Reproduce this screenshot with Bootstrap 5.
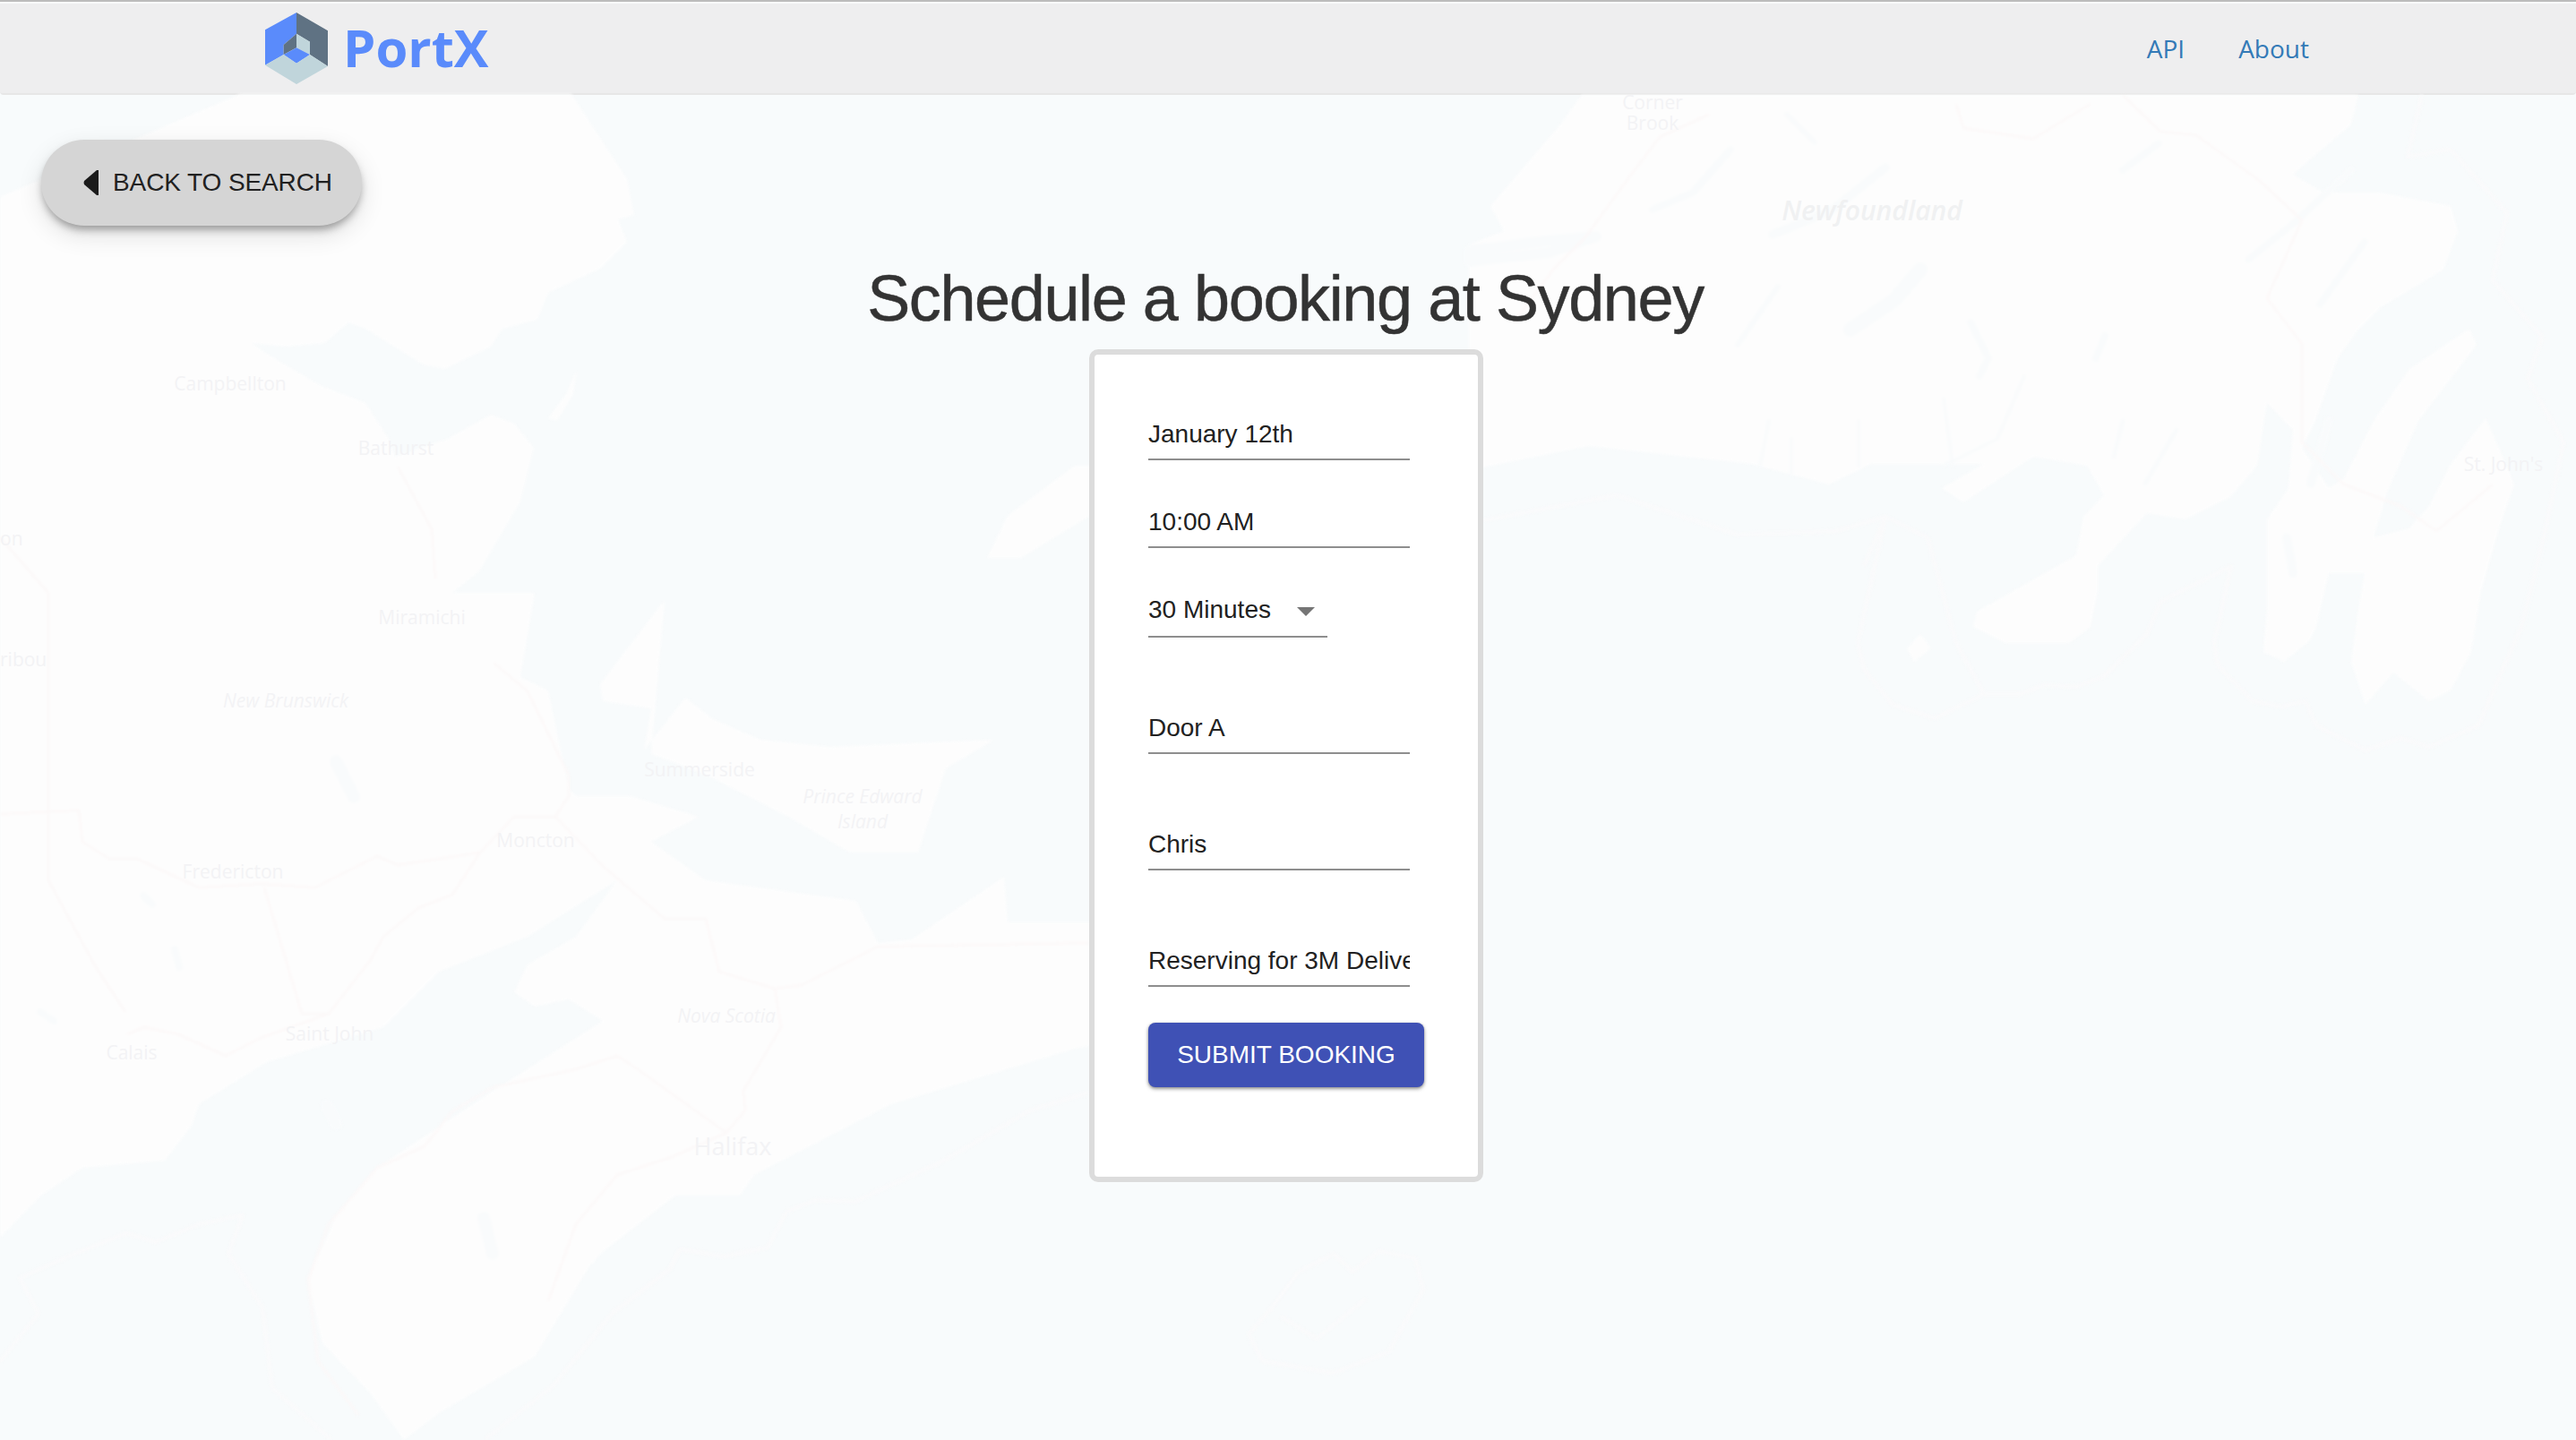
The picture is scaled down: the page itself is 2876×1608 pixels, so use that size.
<!doctype html>
<html lang="en">
<head>
<meta charset="utf-8">
<title>PortX</title>
<link href="https://cdn.jsdelivr.net/npm/bootstrap@5.3.0/dist/css/bootstrap.min.css" rel="stylesheet">
<style>
html,body{height:100%}
body{font-family:"Liberation Sans",Arial,sans-serif;background:#f8fbfc;color:#212121;min-height:1608px;display:flex;flex-direction:column;border-top:2px solid #bcbcbc;overflow:hidden}
.topbar{background:#eeeeef;height:102px;margin-top:2px;padding:0;border-bottom:2px solid #e7e7e7;flex:none;border-radius:0 0 4px 4px}
.topbar-in{padding:0 298px 0 296px}
.brand-mark{width:70px;height:80px;display:block}
.brand-name{font-family:"Open Sans",sans-serif;font-weight:700;font-size:58px;line-height:1;color:#5a8bfb;margin-left:17px;margin-top:-2px;filter:blur(.4px)}
.top-link{font-family:"Open Sans",sans-serif;font-size:28px;color:#337ab7;text-decoration:none;line-height:1}
.links-gap{gap:60px}
.stage{position:relative;flex:1 1 auto;min-height:0}
.map-art{position:absolute;left:0;top:-104px;width:2876px;height:1608px}
.map-shapes{filter:blur(1.5px);transform:translateY(-2px)}
.map-art text{font-family:"Open Sans",sans-serif;font-size:21px;fill:#f3f3f5;text-anchor:middle}
.map-art .it{font-style:italic}
.map-art .edge{text-anchor:start}
.land{fill:#fdfdfd}
.lake{fill:none;stroke:#f9fbfc;stroke-linecap:round;stroke-linejoin:round}
.road{fill:none;stroke:#fcf8f8;stroke-width:2.5;stroke-linejoin:round}
.eez{fill:none;stroke:#fafafb;stroke-width:4;stroke-linejoin:round}
.front{position:relative}
.back-pill{display:inline-flex;align-items:center;height:96px;margin:50px 0 0 46px;padding:0 0 0 47px;width:358px;border:0;border-radius:48px;background:#d5d5d5;color:#212121;font-size:28px;letter-spacing:-.1px;box-shadow:0 6px 10px -2px rgba(0,0,0,.35),0 10px 28px rgba(0,0,0,.12)}
.back-tri{width:17px;height:28px;margin-right:16px;flex:none}
.page-title{font-family:"Liberation Sans",Arial,sans-serif;font-size:72px;font-weight:400;letter-spacing:-1.4px;-webkit-text-stroke:.5px #333;line-height:84px;color:#333;text-align:center;margin:39px 0 15px;padding-right:6px}
.form-wrap{padding-right:4px}
.form-box{width:440px;height:930px;background:#fff;border:6px solid #dcdcdc;border-radius:10px;padding:74px 0 0 60px}
.fld{display:block;width:292px;height:44px;padding:0 0 12px;border:0;border-bottom:2px solid #8e8e8e;border-radius:0;background:transparent;color:#212121;font-family:"Liberation Sans",Arial,sans-serif;font-size:28px;line-height:30px;outline:0}
.fld-time{margin-top:54px}
.fld-pick{width:200px;margin-top:54px;height:46px;padding:0;display:flex;align-items:flex-start;justify-content:space-between}
.pick-caret{width:20px;height:10px;margin:12px 14px 0 0}
.fld-door,.fld-lower{margin-top:86px}
.submit-btn{display:block;width:308px;height:72px;margin-top:40px;padding:0;border:0;border-radius:8px;background:#3f51b5;color:#fff;font-size:28px;box-shadow:0 2px 4px rgba(0,0,0,.35),0 1px 3px rgba(0,0,0,.2)}
</style>
</head>
<body>
<nav class="navbar topbar">
  <div class="container-fluid topbar-in d-flex justify-content-between align-items-center">
    <a class="d-flex align-items-center text-decoration-none" href="#">
      <svg class="brand-mark" viewBox="108 42 210 240" aria-hidden="true">
        <polygon fill="#5a8bfb" points="213,42 108,100 108,218 170,183 170,150 213,113"/>
        <polygon fill="#5f7283" points="213,42 318,103 318,222 258,183 258,140 213,113"/>
        <polygon fill="#5f7283" points="213,113 170,150 170,183 213,160"/>
        <polygon fill="#c0d5db" points="213,113 258,140 258,183 213,160"/>
        <polygon fill="#5a8bfb" points="213,160 258,183 213,212 170,183"/>
        <polygon fill="#c0d5db" points="108,218 170,183 213,212 258,183 318,222 213,282"/>
      </svg>
      <span class="brand-name">PortX</span>
    </a>
    <div class="d-flex links-gap">
      <a class="top-link" href="#">API</a>
      <a class="top-link" href="#">About</a>
    </div>
  </div>
</nav>
<main class="stage">
  <svg class="map-art" viewBox="0 0 2876 1608" aria-hidden="true">
    <g class="map-shapes">
    <polygon class="land" points="0,220 268,105 638,105 700,200 708,240 690,245 700,270 670,300 612,327 600,357 561,367 548,387 497,412 472,407 408,367 389,360 363,383 319,387 280,383 306,400 357,430 408,450 434,490 441,510 500,490 548,463 574,473 596,500 581,560 535,638 505,662 597,662 589,709 581,756 612,771 635,881 643,889 704,889 780,912 727,940 788,983 956,1006 980,1053 1018,1049 1121,979 1125,1030 1230,1030 1230,1165 1200,1171 995,1233 842,1312 826,1335 754,1335 673,1398 658,1414 597,1515 490,1578 451,1608 413,1555 360,1500 344,1429 375,1359 421,1304 551,1218 673,1140 635,1116 597,1124 574,1108 589,1077 643,1046 689,983 589,1046 490,1085 428,1147 298,1186 222,1233 214,1257 184,1296 92,1304 46,1335 0,1382"/>
    <polygon class="land" points="742,670 670,764 673,783 727,791 719,838 765,779 796,803 849,826 926,834 1110,826 1056,858 1025,952 949,952 880,912 788,865 727,842"/>
    <polygon class="land" points="1200,520 1125,576 1102,623 1140,623 1230,568 1230,520"/>
    <polygon class="land" points="644,413 632,440 612,467 622,470 640,440"/>
    <polygon class="land" points="1766,106 2633,106 2625,139 2578,179 2560,195 2594,215 2657,215 2736,230 2744,258 2728,301 2657,344 2633,368 2610,400 2585,470 2570,500 2600,545 2617,534 2650,470 2690,412 2757,367 2765,385 2700,470 2665,550 2650,600 2690,590 2712,565 2735,520 2775,467 2790,500 2807,541 2790,590 2770,660 2759,728 2736,771 2712,783 2672,751 2641,787 2625,739 2633,680 2640,640 2600,640 2586,700 2578,716 2550,739 2527,728 2531,680 2531,580 2555,545 2560,480 2531,450 2520,520 2490,555 2440,580 2397,573 2342,632 2342,660 2334,700 2310,718 2239,718 2203,700 2207,683 2318,620 2326,577 2349,553 2330,520 2270,510 2192,561 2168,545 2215,518 2089,518 2042,541 1955,518 1774,498 1640,525 1640,273 1679,258 1664,230 1742,139"/>
    <polygon class="land" points="2129,724 2144,708 2156,724 2137,739"/>
    <g class="lake">
      <path stroke-width="12" d="M1640 280 1735 268 1782 264 1730 282 1640 292Z"/>
      <path stroke-width="8" d="M1932 167 1890 215 1845 234"/>
      <path stroke-width="6" d="M1995 128 2026 159"/>
      <path stroke-width="10" d="M2105 187 2045 235 1979 262"/>
      <path stroke-width="6" d="M1940 385 1985 320"/>
      <path stroke-width="16" d="M2144 301 2115 335 2066 368"/>
      <path stroke-width="8" d="M2200 360 2220 400 2210 420"/>
      <path stroke-width="8" d="M2350 375 2340 400"/>
      <path stroke-width="4" d="M2260 420 2230 490 2170 520"/>
      <path stroke-width="4" d="M1975 470 1965 520M2000 490 2000 530M2075 470 2075 520M2170 445 2180 520"/>
      <path stroke-width="5" d="M2430 480 2395 540M2370 470 2360 510"/>
      <path stroke-width="8" d="M2410 160 2370 190M2625 190 2560 250 2510 290M2640 270 2590 340"/>
      <path stroke-width="10" d="M2553 600 2560 640M2600 470 2580 540"/>
      <path stroke-width="8" d="M160 1000 170 1010M195 1060 200 1080M45 1130 60 1140"/>
      <path stroke-width="14" d="M540 1360 550 1400M365 1235 375 1255M375 850 395 890"/>
    </g>
    <g class="eez">
      <path d="M2074 718 2081 747 2113 787 2160 802 2195 785 2215 775 2255 775 2282 765 2318 767 2349 755 2397 708 2412 672 2491 632 2472 718 2476 743 2515 783 2547 789 2574 783 2586 810 2641 838 2680 824 2712 834 2767 810 2815 700 2840 600 2862 494 2822 423 2838 376 2783 313 2799 238 2736 167 2688 175 2704 106"/>
      <path d="M2215 775 2184 718 2152 600 2105 577 2074 718M2105 577 2081 632M2105 577 2050 593 1940 597 1805 553 1656 581"/>
      <path d="M0 1520 43 1467 22 1427 76 1403 141 1377 174 1387 222 1367 271 1357 255 1400 293 1460 304 1550 369 1607"/>
      <path d="M542 1607 618 1547 683 1467 748 1417 759 1395 808 1403 857 1393 878 1353 911 1340 954 1342 1052 1297 1150 1240 1215 1220"/>
      <path d="M1489 1400 1450 1420 1420 1460 1394 1490 1410 1520 1489 1533 1550 1510 1589 1440 1580 1405 1540 1397 1510 1420Z"/>
      <path d="M1430 1470 1470 1495 1525 1450"/>
    </g>
    <g class="road">
      <path d="M0 909 88 905 92 940 122 959 153 959 222 991 291 987 352 991 421 956 444 966 536 952 574 912 620 912 635 889 635 866 589 772 551 740"/>
      <path d="M444 521 482 591 486 646"/>
      <path d="M620 912 673 967 742 1026 788 1026 803 1085 865 1104 895 1100 980 1057 1216 1053"/>
      <path d="M865 1104 872 1147 830 1218 832 1240 811 1265 712 1194 689 1179 643 1194 551 1214 505 1241 474 1280 421 1304 367 1367 344 1429 355 1520 400 1580"/>
      <path d="M811 1265 750 1292 689 1312 643 1367 612 1453"/>
      <path d="M536 952 505 999 467 1014 428 1046 413 1073 367 1132 337 1132 295 991"/>
      <path d="M367 1132 291 1159 252 1179 199 1155 161 1147 142 1155"/>
      <path d="M0 600 54 662 54 983 85 1040 107 1080 140 1130"/>
      <path d="M1908 128 1853 153 1821 195 1770 265 1735 300 1690 360"/>
      <path d="M2184 116 2192 143 2270 155 2334 116M2370 106 2412 147 2452 151 2523 202 2570 246 2531 333 2570 384 2570 494 2617 541 2680 565 2720 593 2783 541"/>
    </g>
    </g>
    <text x="257" y="434">Campbellton</text>
    <text x="442" y="506">Bathurst</text>
    <text x="471" y="695">Miramichi</text>
    <text class="it" x="319" y="788">New Brunswick</text>
    <text class="edge" x="0" y="742">ribou</text>
    <text class="edge" x="0" y="607">on</text>
    <text x="260" y="979">Fredericton</text>
    <text x="598" y="944">Moncton</text>
    <text x="781" y="865">Summerside</text>
    <text class="it" x="963" y="895">Prince Edward</text>
    <text class="it" x="963" y="923">Island</text>
    <text x="368" y="1160">Saint John</text>
    <text x="147" y="1181">Calais</text>
    <text class="it" x="811" y="1140">Nova Scotia</text>
    <text x="818" y="1288" style="font-size:27px">Halifax</text>
    <text x="1845" y="120">Corner</text>
    <text x="1845" y="143">Brook</text>
    <text class="it" x="2090" y="244" style="font-size:30px;font-weight:600;fill:#f0f1f2">Newfoundland</text>
    <text x="2795" y="524">St. John's</text>
  </svg>
  <div class="front">
    <button type="button" class="back-pill">
      <svg class="back-tri" viewBox="0 0 17 28" aria-hidden="true"><path fill="#1b1b1b" d="M15 0h2v28h-2L1 16q-1-2 0-4z"/></svg>
      BACK TO SEARCH
    </button>
    <h1 class="page-title">Schedule a booking at Sydney</h1>
    <div class="form-wrap d-flex justify-content-center">
      <form class="form-box">
        <input class="fld" type="text" value="January 12th" aria-label="Date">
        <input class="fld fld-time" type="text" value="10:00 AM" aria-label="Time">
        <div class="fld fld-pick"><span>30 Minutes</span><svg class="pick-caret" viewBox="0 0 20 10" aria-hidden="true"><polygon fill="#757575" points="0,0 20,0 10,10"/></svg></div>
        <input class="fld fld-door" type="text" value="Door A" aria-label="Door">
        <input class="fld fld-lower" type="text" value="Chris" aria-label="Name">
        <input class="fld fld-lower" type="text" value="Reserving for 3M Delivery" aria-label="Notes">
        <button type="button" class="submit-btn">SUBMIT BOOKING</button>
      </form>
    </div>
  </div>
</main>
<script src="https://cdn.jsdelivr.net/npm/bootstrap@5.3.0/dist/js/bootstrap.bundle.min.js"></script>
</body>
</html>
